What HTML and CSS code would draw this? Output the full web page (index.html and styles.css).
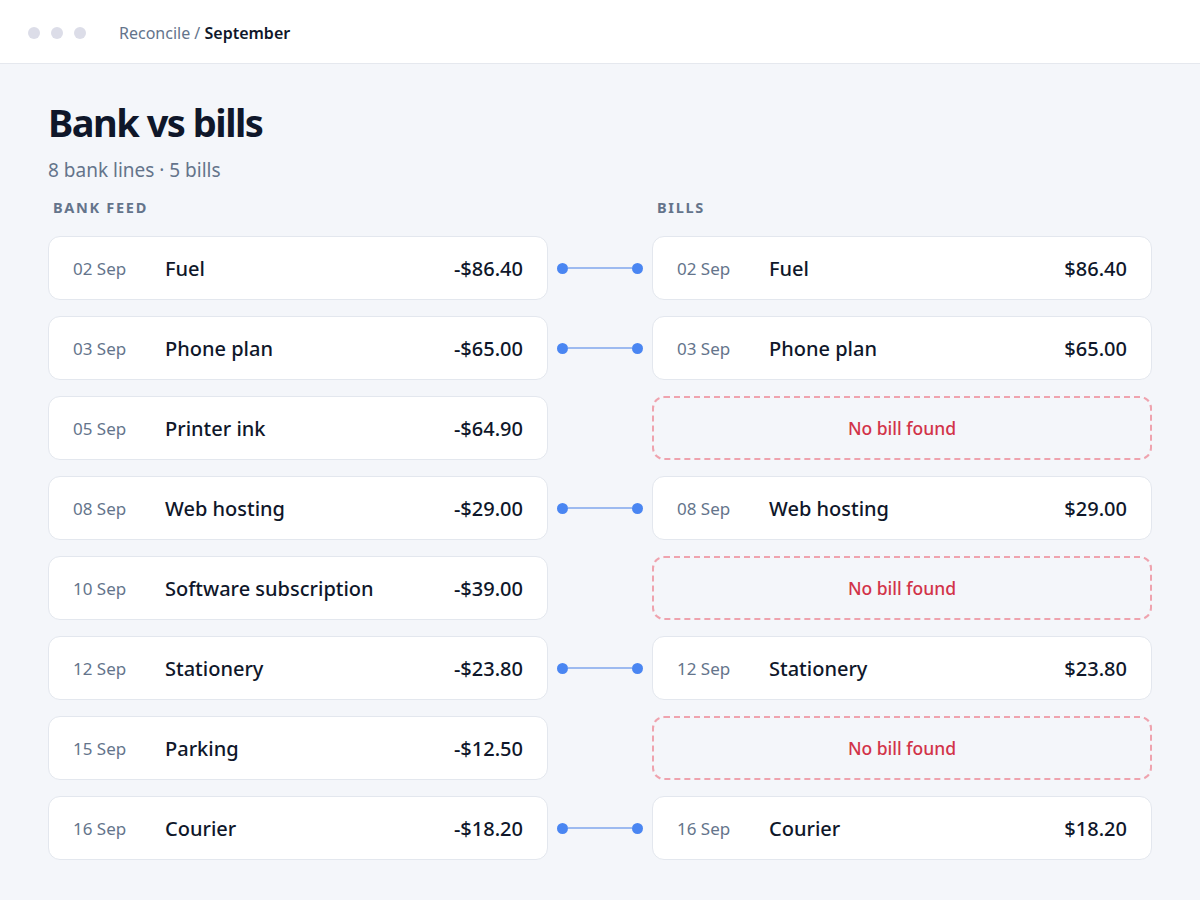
FILE: index.html
```html
<!DOCTYPE html>
<html>
<head>
<meta charset="utf-8">
<link rel="stylesheet" href="styles.css">
</head>
<body>
<header class="topbar">
  <div class="dots"><span class="dot"></span><span class="dot"></span><span class="dot"></span></div>
  <div class="crumb">Reconcile / <strong>September</strong></div>
</header>
<main class="page">
  <h1 class="title">Bank vs bills</h1>
  <p class="sub">8 bank lines · 5 bills</p>
  <div class="grid">
    <div class="label">Bank feed</div><div></div><div class="label">Bills</div>

    <div class="card"><span class="date">02 Sep</span><span class="name">Fuel</span><span class="amt">-$86.40</span></div>
    <div class="link"><span class="ld"></span><span class="ll"></span><span class="ld"></span></div>
    <div class="card"><span class="date">02 Sep</span><span class="name">Fuel</span><span class="amt">$86.40</span></div>

    <div class="card"><span class="date">03 Sep</span><span class="name">Phone plan</span><span class="amt">-$65.00</span></div>
    <div class="link"><span class="ld"></span><span class="ll"></span><span class="ld"></span></div>
    <div class="card"><span class="date">03 Sep</span><span class="name">Phone plan</span><span class="amt">$65.00</span></div>

    <div class="card"><span class="date">05 Sep</span><span class="name">Printer ink</span><span class="amt">-$64.90</span></div>
    <div></div>
    <div class="missing">No bill found</div>

    <div class="card"><span class="date">08 Sep</span><span class="name">Web hosting</span><span class="amt">-$29.00</span></div>
    <div class="link"><span class="ld"></span><span class="ll"></span><span class="ld"></span></div>
    <div class="card"><span class="date">08 Sep</span><span class="name">Web hosting</span><span class="amt">$29.00</span></div>

    <div class="card"><span class="date">10 Sep</span><span class="name">Software subscription</span><span class="amt">-$39.00</span></div>
    <div></div>
    <div class="missing">No bill found</div>

    <div class="card"><span class="date">12 Sep</span><span class="name">Stationery</span><span class="amt">-$23.80</span></div>
    <div class="link"><span class="ld"></span><span class="ll"></span><span class="ld"></span></div>
    <div class="card"><span class="date">12 Sep</span><span class="name">Stationery</span><span class="amt">$23.80</span></div>

    <div class="card"><span class="date">15 Sep</span><span class="name">Parking</span><span class="amt">-$12.50</span></div>
    <div></div>
    <div class="missing">No bill found</div>

    <div class="card"><span class="date">16 Sep</span><span class="name">Courier</span><span class="amt">-$18.20</span></div>
    <div class="link"><span class="ld"></span><span class="ll"></span><span class="ld"></span></div>
    <div class="card"><span class="date">16 Sep</span><span class="name">Courier</span><span class="amt">$18.20</span></div>
  </div>
</main>
</body>
</html>
```

FILE: styles.css
```css
* { box-sizing: border-box; }
html, body { margin: 0; padding: 0; }
body {
  width: 1200px;
  height: 900px;
  background: #f4f6fa;
  font-family: "Noto Sans", "Open Sans", sans-serif;
  color: #0f172a;
  overflow: hidden;
}
.topbar {
  height: 64px;
  background: #ffffff;
  border-bottom: 1px solid #e5e8ee;
  display: flex;
  align-items: center;
  padding-left: 28px;
  padding-top: 2px;
}
.dots { display: flex; gap: 11px; margin-right: 33px; }
.dot { width: 12px; height: 12px; border-radius: 50%; background: #dcdde8; }
.crumb { font-size: 16px; color: #64748b; }
.crumb strong { color: #0f172a; font-weight: 600; }
.page { padding: 32px 48px 0 48px; }
.title {
  margin: 0;
  font-size: 38px;
  font-weight: 700;
  line-height: 52px;
  letter-spacing: -1.5px;
}
.sub {
  margin: 9px 0 0 0;
  font-size: 19px;
  line-height: 26px;
  color: #64748b;
}
.grid {
  margin-top: 14px;
  display: grid;
  grid-template-columns: 500px 104px 500px;
  row-gap: 16px;
}
.label {
  font-size: 14.5px;
  font-weight: 700;
  letter-spacing: 1.7px;
  text-transform: uppercase;
  color: #64748b;
  padding-left: 5px;
  line-height: 20px;
  margin-bottom: 3px;
}
.card {
  height: 64px;
  background: #ffffff;
  border: 1px solid #e3e7ee;
  border-radius: 12px;
  display: flex;
  align-items: center;
  padding: 0 24px 0 24px;
}
.date { width: 92px; flex: none; font-size: 17px; color: #64748b; padding-top: 1px; }
.name { flex: 1; font-size: 20px; font-weight: 500; color: #0f172a; padding-top: 1px; }
.amt { font-size: 20px; font-weight: 500; color: #0f172a; padding-top: 1px; }
.missing {
  height: 64px;
  border: 2px dashed #efa3ae;
  border-radius: 12px;
  display: flex;
  align-items: center;
  justify-content: center;
  font-size: 17.5px;
  font-weight: 500;
  color: #d23349;
}
.link {
  display: flex;
  align-items: center;
  padding: 0 9px 0 9px;
}
.ld { width: 11px; height: 11px; border-radius: 50%; background: #4a86f2; flex: none; }
.ll { flex: 1; height: 2px; background: #9dbaf0; }
```
